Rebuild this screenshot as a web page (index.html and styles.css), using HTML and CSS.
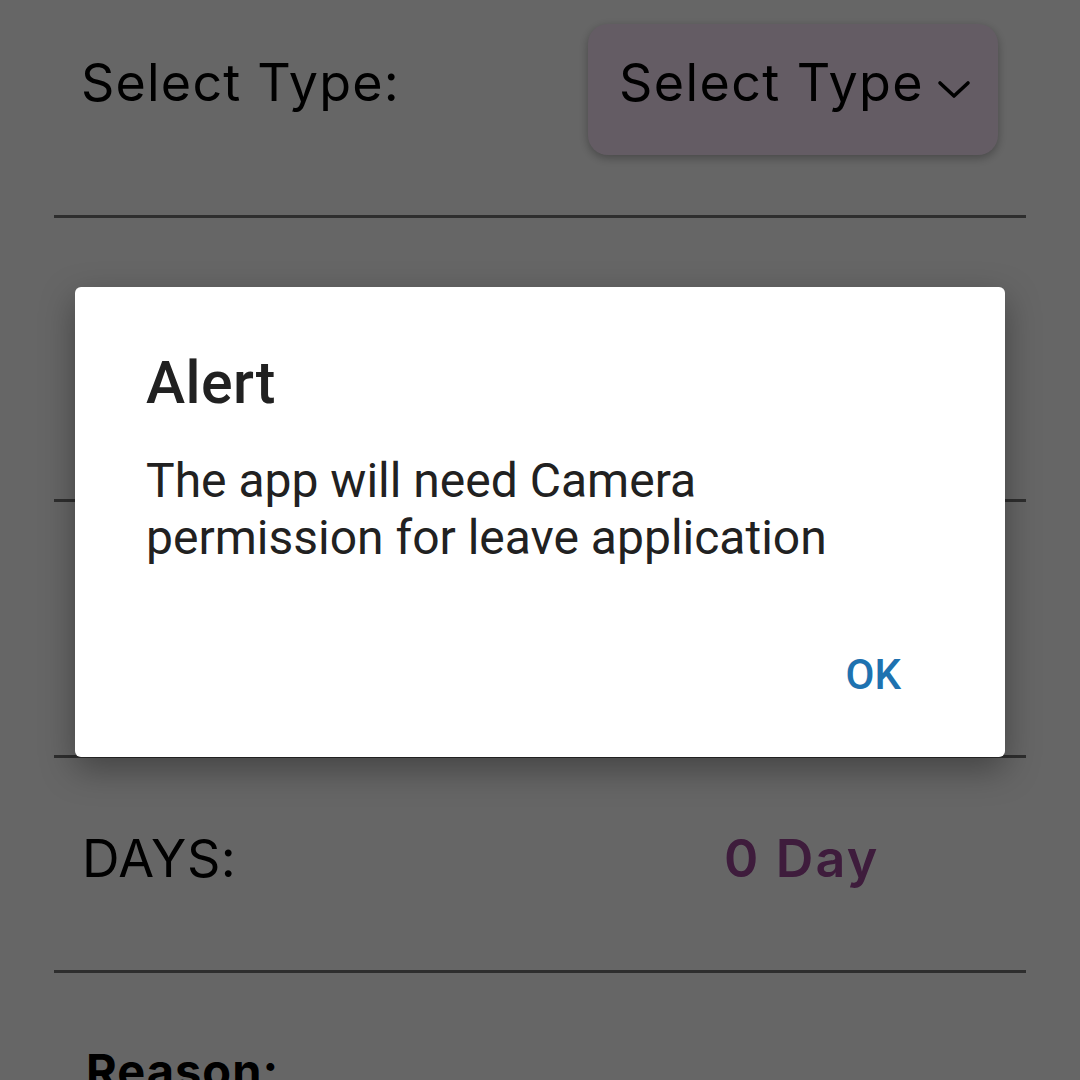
FILE: index.html
```html
<!DOCTYPE html>
<html lang="en">
<head>
<meta charset="utf-8">
<title>Leave Application</title>
<link rel="stylesheet" href="styles.css">
</head>
<body>
<main class="page">
  <section class="row row-type">
    <span class="label label-type">Select Type:</span>
    <div class="dropdown">
      <span class="dropdown-text">Select Type</span>
      <svg class="chevron" width="34" height="20" viewBox="0 0 34 20" aria-hidden="true">
        <polyline points="3,3 17,16 31,3" fill="none" stroke="#000" stroke-width="3.6" stroke-linecap="round" stroke-linejoin="round"/>
      </svg>
    </div>
  </section>
  <hr class="divider">
  <section class="row row-from"></section>
  <hr class="divider">
  <section class="row row-to"></section>
  <hr class="divider">
  <section class="row row-days">
    <span class="label">DAYS:</span>
    <span class="value">0 Day</span>
  </section>
  <hr class="divider">
  <section class="reason">
    <span class="reason-label">Reason:</span>
  </section>
</main>

<div class="overlay">
  <div class="dialog" role="alertdialog">
    <h2 class="dialog-title">Alert</h2>
    <p class="dialog-body">The app will need Camera<br>permission for leave application</p>
    <div class="dialog-actions">
      <span class="dialog-btn">OK</span>
    </div>
  </div>
</div>
</body>
</html>
```

FILE: styles.css
```css
html, body {
  margin: 0;
  padding: 0;
  background: #ffffff;
}

body {
  width: 1080px;
  height: 1080px;
  overflow: hidden;
  position: relative;
  font-family: "Inter", "Open Sans", sans-serif;
  color: #000;
}

.page {
  padding: 0 54px;
}

.row {
  display: flex;
  align-items: center;
  padding: 0 28px;
  box-sizing: border-box;
}

.row-type {
  height: 215px;
  padding: 24px 28px 60px 27px;
  justify-content: space-between;
}

.label {
  font-size: 52px;
  font-weight: 400;
  line-height: 60px;
  letter-spacing: 1.2px;
}

.label-type {
  margin-bottom: 13px;
}

.dropdown {
  width: 410px;
  height: 131px;
  box-sizing: border-box;
  background: #fae6fa;
  border-radius: 20px;
  display: flex;
  align-items: center;
  gap: 13px;
  padding: 0 26px 0 31px;
  box-shadow: 0 3px 10px rgba(0, 0, 0, 0.3);
}

.dropdown-text {
  font-size: 52px;
  line-height: 60px;
  letter-spacing: 1.4px;
  white-space: nowrap;
  margin-bottom: 13px;
}

.chevron {
  display: block;
  flex: none;
}

.divider {
  margin: 0;
  border: 0;
  height: 3px;
  background: #737373;
}

.row-from {
  height: 281px;
}

.row-to {
  height: 253px;
}

.row-days {
  height: 212px;
  padding-top: 0;
  padding-bottom: 10px;
}

.row-days .label {
  flex: 1;
  letter-spacing: 0.6px;
}

.value {
  width: 274px;
  font-size: 52px;
  font-weight: 600;
  line-height: 60px;
  letter-spacing: 2.2px;
  color: #9b4696;
}

.reason {
  padding: 73px 32px 0;
}

.reason-label {
  display: block;
  font-size: 47px;
  font-weight: 700;
  line-height: 50px;
  letter-spacing: 1px;
}

/* modal */
.overlay {
  position: absolute;
  inset: 0;
  background: rgba(0, 0, 0, 0.6);
  display: flex;
  justify-content: center;
  align-items: flex-start;
}

.dialog {
  margin-top: 287px;
  width: 930px;
  height: 470px;
  box-sizing: border-box;
  background: #ffffff;
  border-radius: 6px;
  padding: 62px 72px 0 71px;
  box-shadow: 0 12px 34px rgba(0, 0, 0, 0.35);
  font-family: "Roboto", "Noto Sans", sans-serif;
  color: #212121;
}

.dialog-title {
  margin: 0;
  font-size: 59px;
  font-weight: 500;
  line-height: 68px;
  letter-spacing: 0.4px;
}

.dialog-body {
  margin: 35px 0 0;
  font-size: 48px;
  font-weight: 400;
  line-height: 57px;
}

.dialog-actions {
  display: flex;
  justify-content: flex-end;
  margin-top: 84px;
  padding-right: 32px;
}

.dialog-btn {
  font-size: 42px;
  font-weight: 500;
  line-height: 50px;
  color: #1e72b0;
}
```
